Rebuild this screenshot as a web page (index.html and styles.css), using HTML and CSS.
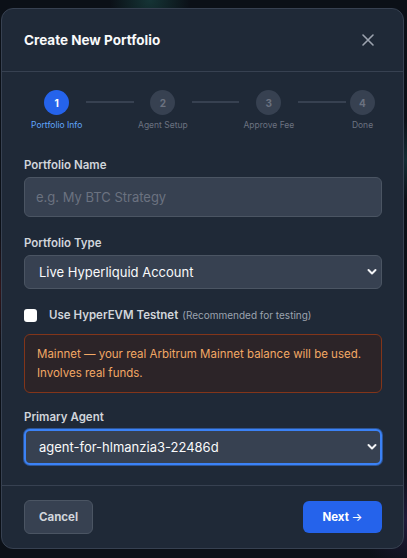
FILE: index.html
```html
<!DOCTYPE html>
<html lang="en">
<head>
    <meta charset="UTF-8">
    <meta name="viewport" content="width=device-width, initial-scale=1.0">
    <title>Create New Portfolio</title>
    <link rel="stylesheet" href="styles.css">
</head>
<body>
    <div class="backdrop">
        <div class="modal">
            <div class="modal-header">
                <h2>Create New Portfolio</h2>
                <button class="close-btn" aria-label="Close">
                    <svg width="14" height="14" viewBox="0 0 14 14">
                        <path d="M2 2 L12 12 M12 2 L2 12" stroke="currentColor" stroke-width="1.6" stroke-linecap="round"/>
                    </svg>
                </button>
            </div>

            <div class="modal-body">
                <!-- wizard progress -->
                <div class="steps">
                    <div class="step active">
                        <div class="step-dot">1</div>
                        <span>Portfolio Info</span>
                    </div>
                    <div class="step-line"></div>
                    <div class="step">
                        <div class="step-dot">2</div>
                        <span>Agent Setup</span>
                    </div>
                    <div class="step-line"></div>
                    <div class="step">
                        <div class="step-dot">3</div>
                        <span>Approve Fee</span>
                    </div>
                    <div class="step-line"></div>
                    <div class="step">
                        <div class="step-dot">4</div>
                        <span>Done</span>
                    </div>
                </div>

                <div class="field">
                    <label>Portfolio Name</label>
                    <input type="text" class="text-input" placeholder="e.g. My BTC Strategy">
                </div>

                <div class="field">
                    <label>Portfolio Type</label>
                    <div class="select-wrap">
                        <select class="select">
                            <option>Live Hyperliquid Account</option>
                        </select>
                        <svg class="chevron" width="10" height="8" viewBox="0 0 10 8">
                            <path d="M1.5 2 L5 5.5 L8.5 2" fill="none" stroke="currentColor" stroke-width="2" stroke-linecap="round" stroke-linejoin="round"/>
                        </svg>
                    </div>
                </div>

                <label class="check-row">
                    <span class="checkbox"></span>
                    <span class="check-label">Use HyperEVM Testnet</span>
                    <span class="check-hint">(Recommended for testing)</span>
                </label>

                <div class="warning">
                    Mainnet — your real Arbitrum Mainnet balance will be used. Involves real funds.
                </div>

                <div class="field last">
                    <label>Primary Agent</label>
                    <div class="select-wrap">
                        <select class="select focused">
                            <option>agent-for-hlmanzia3-22486d</option>
                        </select>
                        <svg class="chevron" width="10" height="8" viewBox="0 0 10 8">
                            <path d="M1.5 2 L5 5.5 L8.5 2" fill="none" stroke="currentColor" stroke-width="2" stroke-linecap="round" stroke-linejoin="round"/>
                        </svg>
                    </div>
                </div>
            </div>

            <div class="modal-footer">
                <button class="btn btn-secondary">Cancel</button>
                <button class="btn btn-primary">Next <span class="arrow">→</span></button>
            </div>
        </div>
    </div>
</body>
</html>
```

FILE: styles.css
```css
* {
    box-sizing: border-box;
}
body {
    margin: 0;
    font-family: Inter, "Noto Sans", sans-serif;
    background-color: #0b1017;
    background-image:
        radial-gradient(circle at 150px 0px, rgba(40, 120, 110, 0.35), transparent 40px),
        radial-gradient(circle at 0px 290px, rgba(120, 30, 30, 0.35), transparent 60px),
        radial-gradient(circle at 407px 160px, rgba(40, 110, 120, 0.3), transparent 40px),
        radial-gradient(circle at 407px 520px, rgba(80, 50, 140, 0.3), transparent 50px);
    min-height: 558px;
}
.backdrop {
    display: flex;
    justify-content: center;
    padding: 8px 3px 9px 1px;
}
.modal {
    width: 403px;
    background: #1f2937;
    border: 1px solid #374151;
    border-radius: 12px;
    color: #e5e7eb;
}
.modal-header {
    display: flex;
    align-items: center;
    justify-content: space-between;
    height: 63px;
    padding: 0 21px 0 22px;
    border-bottom: 1px solid #374151;
}
.modal-header h2 {
    margin: 0;
    font-size: 13.5px;
    font-weight: 700;
    color: #f9fafb;
}
.close-btn {
    background: none;
    border: none;
    padding: 0;
    color: #9ca3af;
    display: flex;
    margin-right: 7px;
}
.modal-body {
    padding: 18px 21px 20px 22px;
}
.steps {
    display: flex;
    align-items: flex-start;
    padding: 0 7px 0 7px;
    margin-bottom: 28px;
}
.step {
    display: flex;
    flex-direction: column;
    align-items: center;
    gap: 5px;
    font-size: 8.5px;
    color: #6b7280;
    white-space: nowrap;
}
.step-dot {
    width: 25px;
    height: 25px;
    border-radius: 50%;
    background: #374151;
    color: #6b7280;
    font-size: 10px;
    font-weight: 700;
    display: flex;
    align-items: center;
    justify-content: center;
}
.step.active {
    color: #60a5fa;
}
.step.active .step-dot {
    background: #2563eb;
    color: #fff;
}
.step-line {
    flex: 1;
    height: 2px;
    background: #374151;
    margin: 11px 4px 0;
}
.field {
    margin-bottom: 19px;
}
.field.last {
    margin-bottom: 0;
}
.field label {
    display: block;
    font-size: 11.5px;
    font-weight: 600;
    color: #d1d5db;
    margin-bottom: 5px;
}
.text-input {
    width: 100%;
    height: 40px;
    background: #374151;
    border: 1px solid #4b5563;
    border-radius: 6px;
    padding: 0 11px;
    font-family: inherit;
    font-size: 13px;
    color: #f3f4f6;
    outline: none;
}
.text-input::placeholder {
    color: #6b7280;
}
.select-wrap {
    position: relative;
}
.select {
    width: 100%;
    height: 34px;
    appearance: none;
    background: #374151;
    border: 1px solid #4b5563;
    border-radius: 6px;
    padding: 0 14px;
    font-family: inherit;
    font-size: 13px;
    color: #f9fafb;
    outline: none;
}
.select.focused {
    height: 36px;
    border: 2px solid #3b82f6;
    padding: 0 13px;
    box-shadow: 0 0 0 1px rgba(59, 130, 246, 0.5);
}
.chevron {
    position: absolute;
    right: 5px;
    top: 50%;
    transform: translateY(-50%);
    color: #f3f4f6;
}
.check-row {
    display: flex;
    align-items: center;
    margin: 18px 0 12px;
}
.checkbox {
    width: 13px;
    height: 13px;
    background: #fff;
    border-radius: 3px;
    margin-right: 12px;
}
.check-label {
    font-size: 11.5px;
    font-weight: 600;
    color: #d1d5db;
    margin-right: 4px;
}
.check-hint {
    font-size: 10px;
    color: #9ca3af;
}
.warning {
    background: #2c2428;
    border: 1px solid #82351a;
    border-radius: 6px;
    padding: 10px 12px 9px;
    font-size: 11.5px;
    line-height: 19px;
    color: #f3a865;
    margin-bottom: 17px;
}
.modal-footer {
    display: flex;
    justify-content: space-between;
    align-items: center;
    border-top: 1px solid #374151;
    padding: 14px 21px 14px 22px;
}
.btn {
    font-family: inherit;
    font-size: 11.5px;
    font-weight: 700;
    border-radius: 6px;
    height: 34px;
}
.btn-secondary {
    background: #374151;
    border: 1px solid #4b5563;
    color: #d1d5db;
    padding: 0 14px;
}
.btn-primary {
    background: #2563eb;
    border: none;
    color: #fff;
    height: 32px;
    width: 79px;
}
.arrow {
    font-weight: 400;
}
```
